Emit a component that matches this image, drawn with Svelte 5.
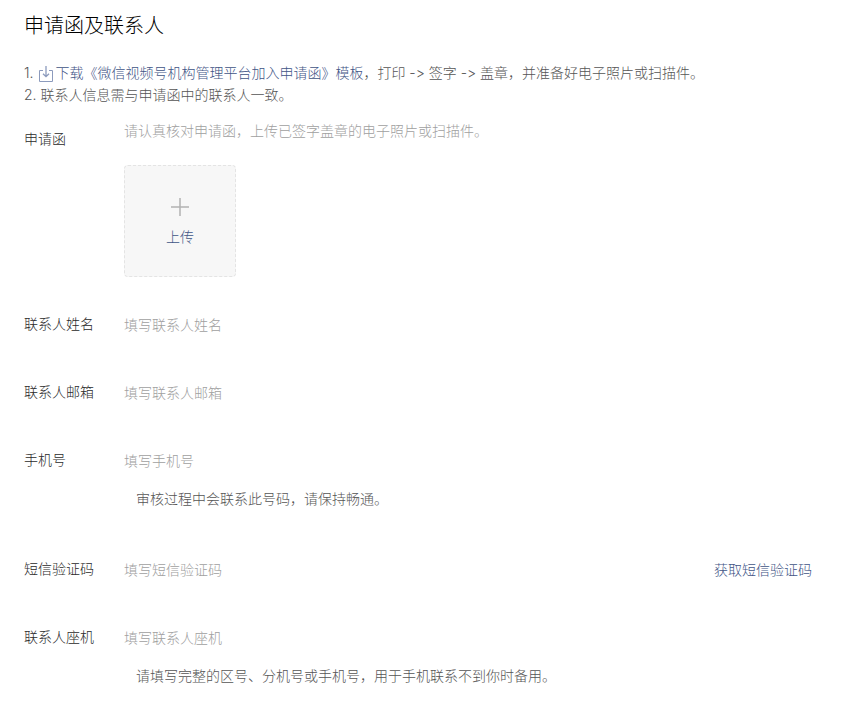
<style>
  :global(body) {
      margin: 0;
      background-color: #ffffff;
  }

  .page {
      padding: 11px 24px 16px;
      font-family: Inter, "Noto Sans CJK SC", sans-serif;
      font-size: 14px;
      font-weight: 300;
      font-variant-ligatures: none;
      line-height: 22px;
      color: #555555;
  }

  h2 {
      margin: 0 0 21px;
      font-size: 20px;
      font-weight: 300;
      line-height: 30px;
      color: #000000;
  }

  .tips p {
      margin: 0;
  }

  a {
      color: #3f5586;
      text-decoration: none;
  }

  .download {
      width: 16px;
      height: 16px;
      margin: 0 1px;
      vertical-align: -4px;
  }

  .form {
      margin-top: 15px;
  }

  .row {
      display: flex;
      align-items: flex-start;
      margin-bottom: 30px;
  }

  .upload-row {
      margin-bottom: 29px;
  }

  .label {
      flex: none;
      width: 100px;
      padding-top: 7px;
      color: #2a2a2a;
  }

  .content {
      flex: 1;
      min-width: 0;
  }

  .desc {
      margin: 0 0 24px;
      line-height: 20px;
      color: #a0a0a0;
  }

  .upload {
      display: flex;
      flex-direction: column;
      align-items: center;
      justify-content: center;
      gap: 10px;
      width: 112px;
      height: 112px;
      padding: 4px 0 0;
      border: 1px dashed #e4e4e4;
      border-radius: 4px;
      background-color: #f7f7f7;
      font: inherit;
      color: #3f5586;
      cursor: pointer;
  }

  .upload svg {
      width: 18px;
      height: 18px;
  }

  .field {
      display: flex;
      align-items: center;
      height: 38px;
  }

  input {
      flex: 1;
      min-width: 0;
      padding: 0;
      border: 0;
      outline: 0;
      background: none;
      font: inherit;
      color: #2a2a2a;
  }

  input::placeholder {
      color: #a0a0a0;
      opacity: 1;
  }

  .code {
      margin-right: 10px;
      padding: 0;
      border: 0;
      background: none;
      font: inherit;
      color: #3f5586;
      cursor: pointer;
  }

  .hint {
      margin: 8px 0 0;
      padding: 0 12px 11px;
  }
</style>

<script>
  const fields = [
    { id: 'name', label: '联系人姓名', type: 'text' },
    { id: 'email', label: '联系人邮箱', type: 'email' },
    { id: 'mobile', label: '手机号', type: 'tel', hint: '审核过程中会联系此号码，请保持畅通。' },
    { id: 'code', label: '短信验证码', type: 'text', button: '获取短信验证码' },
    { id: 'phone', label: '联系人座机', type: 'tel', hint: '请填写完整的区号、分机号或手机号，用于手机联系不到你时备用。' }
  ]

  let values = { name: '', email: '', mobile: '', code: '', phone: '' }
</script>

<div class="page">
  <h2>申请函及联系人</h2>

  <div class="tips">
    <p>
      1. <a href="#template"><svg class="download" viewBox="0 0 16 16" fill="none" stroke="#8c9bbd" aria-hidden="true">
        <path d="M5 4.5H1.5v11h13v-11H11" />
        <path d="M8 0v10.5M5 7.7l3 3 3-3" stroke-width="1.3" />
      </svg>下载《微信视频号机构管理平台加入申请函》模板</a>，打印 -&gt; 签字 -&gt; 盖章，并准备好电子照片或扫描件。
    </p>
    <p>2. 联系人信息需与申请函中的联系人一致。</p>
  </div>

  <form class="form" on:submit|preventDefault>
    <div class="row upload-row">
      <label class="label" for="upload">申请函</label>
      <div class="content">
        <p class="desc">请认真核对申请函，上传已签字盖章的电子照片或扫描件。</p>
        <button class="upload" id="upload" type="button">
          <svg viewBox="0 0 18 18" stroke="#b2b2b2" stroke-width="1.5" aria-hidden="true">
            <path d="M9 0v18M0 9h18" />
          </svg>
          <span>上传</span>
        </button>
      </div>
    </div>

    {#each fields as field}
      <div class="row">
        <label class="label" for={field.id}>{field.label}</label>
        <div class="content">
          <div class="field">
            <input
              id={field.id}
              type={field.type}
              placeholder={'填写' + field.label}
              value={values[field.id]}
              on:input={(e) => values[field.id] = e.target.value}
            />
            {#if field.button}
              <button class="code" type="button">{field.button}</button>
            {/if}
          </div>
          {#if field.hint}
            <p class="hint">{field.hint}</p>
          {/if}
        </div>
      </div>
    {/each}
  </form>
</div>
